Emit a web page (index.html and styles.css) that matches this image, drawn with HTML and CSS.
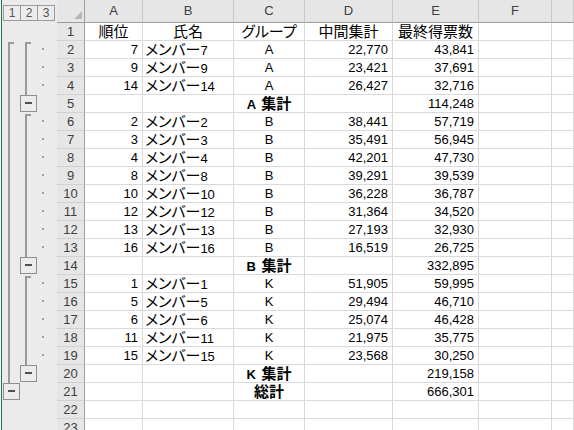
FILE: index.html
```
<!DOCTYPE html>
<html lang="ja">
<head>
<meta charset="utf-8">
<link rel="stylesheet" href="styles.css">
</head>
<body>
<div class="app">
  <div class="gutter">
    <div class="levels"><span class="lv">1</span><span class="lv">2</span><span class="lv">3</span></div>
    <svg class="outline" width="57" height="407" viewBox="0 23 57 407">
      <g fill="#9a9a9a">
        <rect x="8" y="42" width="2" height="341"/><rect x="8" y="42" width="6" height="2"/>
        <rect x="25" y="42" width="2" height="53"/><rect x="25" y="42" width="6" height="2"/>
        <rect x="25" y="114" width="2" height="143"/><rect x="25" y="114" width="6" height="2"/>
        <rect x="25" y="276" width="2" height="89"/><rect x="25" y="276" width="6" height="2"/>
      </g>
      <g fill="#a0a0a0">
        <rect x="42" y="48" width="2" height="2"/><rect x="42" y="66" width="2" height="2"/><rect x="42" y="84" width="2" height="2"/>
        <rect x="42" y="120" width="2" height="2"/><rect x="42" y="138" width="2" height="2"/><rect x="42" y="156" width="2" height="2"/><rect x="42" y="174" width="2" height="2"/>
        <rect x="42" y="192" width="2" height="2"/><rect x="42" y="210" width="2" height="2"/><rect x="42" y="228" width="2" height="2"/><rect x="42" y="246" width="2" height="2"/>
        <rect x="42" y="282" width="2" height="2"/><rect x="42" y="300" width="2" height="2"/><rect x="42" y="318" width="2" height="2"/><rect x="42" y="336" width="2" height="2"/><rect x="42" y="354" width="2" height="2"/>
      </g>
      <g fill="#ececec" stroke="#8f8f8f" stroke-width="1">
        <rect x="20.5" y="95.5" width="16" height="16"/>
        <rect x="20.5" y="257.5" width="16" height="16"/>
        <rect x="20.5" y="365.5" width="16" height="16"/>
        <rect x="3.5" y="383.5" width="16" height="16"/>
      </g>
      <g fill="#505050">
        <rect x="25" y="102" width="7" height="2"/>
        <rect x="25" y="264" width="7" height="2"/>
        <rect x="25" y="372" width="7" height="2"/>
        <rect x="8" y="390" width="7" height="2"/>
      </g>
    </svg>
  </div>
  <div class="sheet">
    <div class="ch corner"><span class="tri"></span></div>
    <div class="ch">A</div><div class="ch">B</div><div class="ch">C</div><div class="ch">D</div><div class="ch">E</div><div class="ch">F</div><div class="ch"></div>

    <div class="rh">1</div><div class="c m jp">順位</div><div class="c m jp">氏名</div><div class="c m jp">グループ</div><div class="c m jp">中間集計</div><div class="c m jp">最終得票数</div><div class="c"></div><div class="c"></div>

    <div class="rh">2</div><div class="c n">7</div><div class="c t"><span class="jp">メンバー</span>7</div><div class="c m">A</div><div class="c n">22,770</div><div class="c n">43,841</div><div class="c"></div><div class="c"></div>
    <div class="rh">3</div><div class="c n">9</div><div class="c t"><span class="jp">メンバー</span>9</div><div class="c m">A</div><div class="c n">23,421</div><div class="c n">37,691</div><div class="c"></div><div class="c"></div>
    <div class="rh">4</div><div class="c n">14</div><div class="c t"><span class="jp">メンバー</span>14</div><div class="c m">A</div><div class="c n">26,427</div><div class="c n">32,716</div><div class="c"></div><div class="c"></div>
    <div class="rh">5</div><div class="c"></div><div class="c"></div><div class="c m b">A <span class="jp gap">集計</span></div><div class="c"></div><div class="c n">114,248</div><div class="c"></div><div class="c"></div>

    <div class="rh">6</div><div class="c n">2</div><div class="c t"><span class="jp">メンバー</span>2</div><div class="c m">B</div><div class="c n">38,441</div><div class="c n">57,719</div><div class="c"></div><div class="c"></div>
    <div class="rh">7</div><div class="c n">3</div><div class="c t"><span class="jp">メンバー</span>3</div><div class="c m">B</div><div class="c n">35,491</div><div class="c n">56,945</div><div class="c"></div><div class="c"></div>
    <div class="rh">8</div><div class="c n">4</div><div class="c t"><span class="jp">メンバー</span>4</div><div class="c m">B</div><div class="c n">42,201</div><div class="c n">47,730</div><div class="c"></div><div class="c"></div>
    <div class="rh">9</div><div class="c n">8</div><div class="c t"><span class="jp">メンバー</span>8</div><div class="c m">B</div><div class="c n">39,291</div><div class="c n">39,539</div><div class="c"></div><div class="c"></div>
    <div class="rh">10</div><div class="c n">10</div><div class="c t"><span class="jp">メンバー</span>10</div><div class="c m">B</div><div class="c n">36,228</div><div class="c n">36,787</div><div class="c"></div><div class="c"></div>
    <div class="rh">11</div><div class="c n">12</div><div class="c t"><span class="jp">メンバー</span>12</div><div class="c m">B</div><div class="c n">31,364</div><div class="c n">34,520</div><div class="c"></div><div class="c"></div>
    <div class="rh">12</div><div class="c n">13</div><div class="c t"><span class="jp">メンバー</span>13</div><div class="c m">B</div><div class="c n">27,193</div><div class="c n">32,930</div><div class="c"></div><div class="c"></div>
    <div class="rh">13</div><div class="c n">16</div><div class="c t"><span class="jp">メンバー</span>16</div><div class="c m">B</div><div class="c n">16,519</div><div class="c n">26,725</div><div class="c"></div><div class="c"></div>
    <div class="rh">14</div><div class="c"></div><div class="c"></div><div class="c m b">B <span class="jp gap">集計</span></div><div class="c"></div><div class="c n">332,895</div><div class="c"></div><div class="c"></div>

    <div class="rh">15</div><div class="c n">1</div><div class="c t"><span class="jp">メンバー</span>1</div><div class="c m">K</div><div class="c n">51,905</div><div class="c n">59,995</div><div class="c"></div><div class="c"></div>
    <div class="rh">16</div><div class="c n">5</div><div class="c t"><span class="jp">メンバー</span>5</div><div class="c m">K</div><div class="c n">29,494</div><div class="c n">46,710</div><div class="c"></div><div class="c"></div>
    <div class="rh">17</div><div class="c n">6</div><div class="c t"><span class="jp">メンバー</span>6</div><div class="c m">K</div><div class="c n">25,074</div><div class="c n">46,428</div><div class="c"></div><div class="c"></div>
    <div class="rh">18</div><div class="c n">11</div><div class="c t"><span class="jp">メンバー</span>11</div><div class="c m">K</div><div class="c n">21,975</div><div class="c n">35,775</div><div class="c"></div><div class="c"></div>
    <div class="rh">19</div><div class="c n">15</div><div class="c t"><span class="jp">メンバー</span>15</div><div class="c m">K</div><div class="c n">23,568</div><div class="c n">30,250</div><div class="c"></div><div class="c"></div>
    <div class="rh">20</div><div class="c"></div><div class="c"></div><div class="c m b">K <span class="jp gap">集計</span></div><div class="c"></div><div class="c n">219,158</div><div class="c"></div><div class="c"></div>
    <div class="rh">21</div><div class="c"></div><div class="c"></div><div class="c m b jp">総計</div><div class="c"></div><div class="c n">666,301</div><div class="c"></div><div class="c"></div>
    <div class="rh">22</div><div class="c"></div><div class="c"></div><div class="c"></div><div class="c"></div><div class="c"></div><div class="c"></div><div class="c"></div>
    <div class="rh">23</div><div class="c"></div><div class="c"></div><div class="c"></div><div class="c"></div><div class="c"></div><div class="c"></div><div class="c"></div>
  </div>
</div>
</body>
</html>
```
FILE: styles.css
```
* { box-sizing: border-box; }
html, body { margin: 0; padding: 0; background: #ffffff; overflow: hidden; }
body {
  font-family: "Liberation Sans", "Noto Sans CJK JP", sans-serif;
  font-size: 13px;
  color: #000;
}
.app { display: flex; width: 574px; height: 430px; overflow: hidden; }
.gutter {
  width: 57px;
  flex: none;
  background: #ebebeb;
  border-left: 1px solid #f6f6f6;
  box-shadow: inset 1px 0 0 #217346;
  display: flex;
  flex-direction: column;
}
.levels { height: 23px; display: flex; padding: 5px 0 0 2px; }
.lv {
  width: 18px;
  height: 16px;
  border: 1px solid #9c9c9c;
  margin-right: -1px;
  font-size: 12px;
  line-height: 14px;
  text-align: center;
  color: #555;
  background: #ececec;
}
.outline { display: block; margin-left: -1px; }
.sheet {
  flex: 1;
  display: grid;
  grid-template-columns: 28px 58px 91px 71px 88px 86px 73px 1fr;
  grid-template-rows: 23px repeat(23, 18px);
  align-content: start;
}
.ch {
  background: #e6e6e6;
  border-right: 1px solid #c8c8c8;
  border-bottom: 1px solid #9e9e9e;
  text-align: center;
  font-size: 13px;
  line-height: 22px;
  color: #404040;
}
.corner {
  display: flex;
  justify-content: flex-end;
  align-items: flex-end;
  padding: 0 2px 3px 0;
  border-right: 1px solid #9e9e9e;
}
.tri {
  width: 0;
  height: 0;
  border-left: 8px solid transparent;
  border-bottom: 8px solid #b9b9b9;
}
.rh {
  background: #e6e6e6;
  border-right: 1px solid #9e9e9e;
  border-bottom: 1px solid #d2d2d2;
  text-align: center;
  line-height: 17px;
  font-size: 13px;
  color: #404040;
}
.c {
  border-right: 1px solid #d9d9d9;
  border-bottom: 1px solid #d9d9d9;
  line-height: 17px;
  white-space: nowrap;
  overflow: visible;
}
.n { text-align: right; padding-right: 4px; }
.t { text-align: left; padding-left: 2px; }
.m { text-align: center; }
.b { font-weight: bold; }
.jp { font-size: 15px; font-feature-settings: "palt"; }
.gap { margin-left: 2px; }
```
